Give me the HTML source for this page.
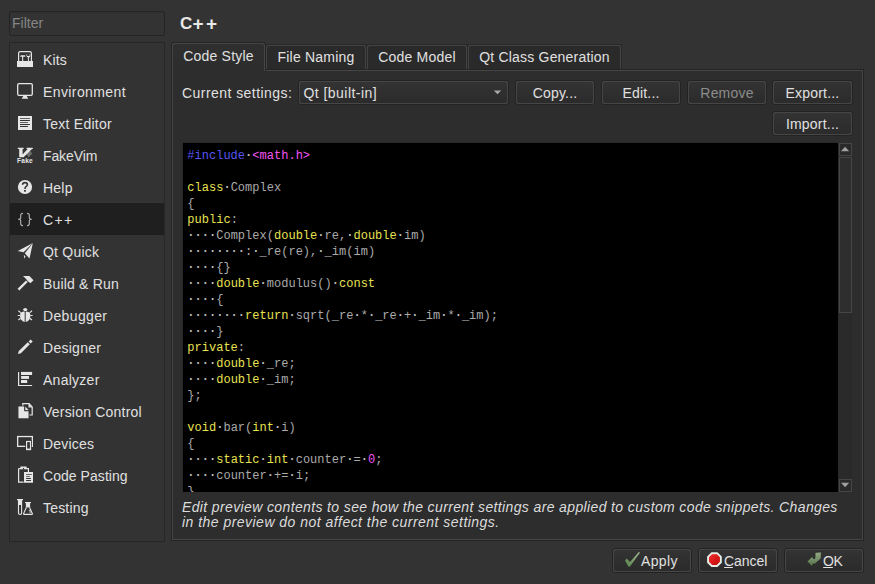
<!DOCTYPE html>
<html><head><meta charset="utf-8">
<style>
*{margin:0;padding:0;box-sizing:border-box}
html,body{width:875px;height:584px;overflow:hidden;background:#333333}
body{position:relative;font-family:"Liberation Sans",sans-serif;font-size:14px;color:#e0e0e0}
.a{position:absolute}
.t{position:absolute;white-space:nowrap;line-height:16px}
#filter{left:9px;top:11px;width:156px;height:25px;border:1px solid #242424;border-radius:2px;background:#333333;box-shadow:inset 0 1px 0 rgba(0,0,0,0.07)}
#filter span{position:absolute;left:2px;top:3px;line-height:16px;color:#868686;letter-spacing:0px}
#list{left:9px;top:42px;width:156px;height:500px;border:1px solid #272727;background:#333333}
.row{position:absolute;left:0;width:154px;height:32px}
.row.sel{background:#1f1f1f}
.row span{position:absolute;left:33px;top:8.5px;line-height:16px;letter-spacing:0.25px;color:#e0e0e0;white-space:nowrap}
.row svg{position:absolute;left:5px;top:6px;width:20px;height:20px}
#title{left:180px;top:16px;font-weight:bold;font-size:17px;color:#e8e8e8}
#title b{display:inline-block;font-size:19px;vertical-align:top;margin-top:-0.5px;width:13.6px;text-align:center;margin-left:-1px}
#title b+b{margin-left:0}
.tab{position:absolute;height:25px;border:1px solid #282828;border-bottom:none;border-radius:3px 3px 0 0;background:#434343;padding:1px 1px 0 1px}
.tab>i{display:block;width:100%;height:100%;background:#2a2a2a;border-radius:2px 2px 0 0}
.tab span{position:absolute;top:4px;left:0;width:100%;text-align:center;letter-spacing:0.2px;color:#e0e0e0;line-height:16px;white-space:nowrap}
#panel{left:171px;top:69px;width:693px;height:472px;border:1px solid #242424;background:#464646;padding:1px}
#panel>div{width:100%;height:100%;background:#2d2d2d}
.btn{position:absolute;height:25px;border:1px solid #232323;border-radius:3px;background:#464646;padding:1px}
.btn>i{display:block;width:100%;height:100%;background:linear-gradient(#333333,#2b2b2b);border-radius:2px}
.btn span{position:absolute;top:3.5px;left:0;width:100%;text-align:center;letter-spacing:0.2px;color:#e0e0e0;line-height:16px;white-space:nowrap}
#editor{left:183px;top:143px;width:655px;height:349px;background:#000;overflow:hidden;box-shadow:-1px -1px 0 #282828}
#code{position:absolute;left:4.3px;top:4.5px;font-family:"Liberation Mono",monospace;font-size:12px;line-height:16px;color:#aaaaaa;white-space:pre;letter-spacing:0.02px}
.k{color:#e8e250}.p{color:#5555f0}.s{color:#f055f0}.d{color:#bdbdbd;font-weight:bold}
#desc{left:182px;top:500px;font-style:italic;color:#dcdcdc;line-height:15px;letter-spacing:0.37px}
svg{overflow:visible}
</style></head><body>
<div id="filter" class="a"><span>Filter</span></div>
<div id="list" class="a">
 <div class="row" style="top:0"><svg viewBox="0 0 20 20"><g fill="#e6e6e6"><path d="M3.6 12V4.2Q3.6 2.6 5.2 2.6H14.8Q16.4 2.6 16.4 4.2V12" fill="none" stroke="#e6e6e6" stroke-width="1.2"/><rect x="2" y="12" width="16" height="6"/><path d="M5 7.2L6 6.2H10.2V7.8H8.2V12H7.1V7.8H5.6Z"/><path fill-rule="evenodd" d="M11.4 6.6A2.1 2.1 0 0 0 12.9 8.6V12H13.9V8.6A2.1 2.1 0 0 0 15.4 6.6Q15.4 5.4 14.6 4.8V7H12.2V4.8Q11.4 5.4 11.4 6.6Z"/></g></svg><span style="letter-spacing:0.17px">Kits</span></div>
 <div class="row" style="top:32px"><svg viewBox="0 0 20 20"><rect x="2.7" y="2.7" width="14.6" height="11.6" rx="1.3" fill="none" stroke="#e6e6e6" stroke-width="1.3"/><path d="M8.3 15H11.7L13.3 17.8H6.7Z" fill="#e6e6e6"/></svg><span style="letter-spacing:0.40px">Environment</span></div>
 <div class="row" style="top:64px"><svg viewBox="0 0 20 20"><path fill="#e6e6e6" fill-rule="evenodd" d="M3 3H17V17H3Z M5 5H14.9V5.8H5Z M5 7.1H14.9V7.9H5Z M5 9.05H12.9V9.85H5Z M5 11.1H14.9V11.9H5Z M5 13.1H12.9V13.9H5Z"/></svg><span style="letter-spacing:0.25px">Text Editor</span></div>
 <div class="row" style="top:96px"><svg viewBox="0 0 20 20"><path d="M10.5 7.5L14 4.5L17.2 8.5L13.6 12.4Z" fill="#6e6e6e"/><path fill="#e6e6e6" d="M2.8 2.8H8.6V4H7.6V9.6L12.6 4H11.6V2.8H17.8V4H17L8.6 12.2H4.2V4H2.8Z"/><text x="10" y="18.2" font-size="6.6" font-weight="bold" text-anchor="middle" font-family="Liberation Sans" fill="#e6e6e6" letter-spacing="0.2">Fake</text></svg><span style="letter-spacing:-0.11px">FakeVim</span></div>
 <div class="row" style="top:128px"><svg viewBox="0 0 20 20"><circle cx="10" cy="10" r="7.1" fill="#e6e6e6"/><path d="M7.6 7.8Q7.6 5.6 10 5.6Q12.4 5.6 12.4 7.6Q12.4 8.8 11 9.6Q10 10.2 10 11.9" fill="none" stroke="#333" stroke-width="1.6"/><rect x="9.1" y="13" width="1.8" height="1.7" fill="#333"/></svg><span style="letter-spacing:0.21px">Help</span></div>
 <div class="row sel" style="top:160px"><svg viewBox="0 0 20 20"><g fill="none" stroke="#b4b4b4" stroke-width="1.1"><path d="M8 4.3Q5.7 4.3 5.7 6.5V8.7Q5.7 10.3 3.2 10.3Q5.7 10.3 5.7 11.9V14.4Q5.7 16.6 8 16.6"/><path d="M12 4.3Q14.3 4.3 14.3 6.5V8.7Q14.3 10.3 16.8 10.3Q14.3 10.3 14.3 11.9V14.4Q14.3 16.6 12 16.6"/></g></svg><span style="letter-spacing:1.30px">C++</span></div>
 <div class="row" style="top:192px"><svg viewBox="0 0 20 20"><g fill="#e6e6e6"><path d="M2.8 10L17.8 2L8.6 11.2Z"/><path d="M9.8 12.3L17.8 2.2L14.5 17.6Z"/><path d="M8.8 14L10.5 15.3L9.4 17.8Z"/></g></svg><span style="letter-spacing:0.22px">Qt Quick</span></div>
 <div class="row" style="top:224px"><svg viewBox="0 0 20 20"><g fill="#e6e6e6"><path d="M2.6 15.8L11 7.4L12.7 9.1L4.3 17.5Z"/><path d="M8 3.1H14.4L18.5 7.3L15.4 10.3L12.9 8.2L10.6 5.6Z"/></g></svg><span style="letter-spacing:0.18px">Build &amp; Run</span></div>
 <div class="row" style="top:256px"><svg viewBox="0 0 20 20"><g fill="#e6e6e6"><path d="M7.9 4.8Q8.5 3 10.2 3Q11.9 3 12.6 4.8L11.3 6H9.2Z"/><path d="M9.7 6.4Q6.5 6.2 5.3 8Q4.6 12 6 14.5Q7.5 16.6 9.7 17Z"/><path d="M10.7 6.4Q13.9 6.2 15.1 8Q15.8 12 14.4 14.5Q12.9 16.6 10.7 17Z"/></g><g stroke="#e6e6e6" stroke-width="1.2"><path d="M3.4 5.8L5.6 7.6M2.8 10.5H5.2M3.4 15L5.6 13.3M17 5.8L14.8 7.6M17.6 10.5H15.2M17 15L14.8 13.3"/></g></svg><span style="letter-spacing:0.36px">Debugger</span></div>
 <div class="row" style="top:288px"><svg viewBox="0 0 20 20"><g fill="#e6e6e6"><path d="M2.9 17.1L3.8 14.1L12.8 5.2L14.8 7.2L5.9 16.2Z"/><path d="M13.6 4.4L15.6 2.4L17.7 4.5L15.7 6.5Z"/></g></svg><span style="letter-spacing:0.27px">Designer</span></div>
 <div class="row" style="top:320px"><svg viewBox="0 0 20 20"><g fill="#e6e6e6"><path d="M3 3H4.2V15.9H17.1V17.1H3Z"/><rect x="6" y="2.9" width="11.1" height="3.1"/><rect x="6.1" y="7" width="7.9" height="2.9"/><rect x="6" y="11" width="6.2" height="3"/></g></svg><span style="letter-spacing:0.26px">Analyzer</span></div>
 <div class="row" style="top:352px"><svg viewBox="0 0 20 20"><path d="M7.8 2.7H14.1L17.2 5.9V14H7.8Z M14.1 2.7V5.9H17.2" fill="none" stroke="#e6e6e6" stroke-width="1.2"/><path d="M3 5H9.6V9.8H14V17.8H3Z" fill="#e6e6e6" stroke="#333" stroke-width="0.9"/><path d="M10.3 5.6L13.6 8.9H10.3Z" fill="#e6e6e6"/></svg><span style="letter-spacing:0.21px">Version Control</span></div>
 <div class="row" style="top:384px"><svg viewBox="0 0 20 20"><rect x="2.65" y="3.55" width="14.7" height="9.8" fill="none" stroke="#e6e6e6" stroke-width="1.3"/><rect x="10.2" y="7.2" width="6.6" height="10.6" fill="#333"/><rect x="11.6" y="8.5" width="3.9" height="8" fill="none" stroke="#e6e6e6" stroke-width="1.2"/><rect x="11" y="15.6" width="5.1" height="1.5" fill="#e6e6e6"/></svg><span style="letter-spacing:0.21px">Devices</span></div>
 <div class="row" style="top:416px"><svg viewBox="0 0 20 20"><path d="M3.6 3.6H6V2.2H11V3.6H13.4V7M8.6 17.2H3.6V3.6" fill="none" stroke="#e6e6e6" stroke-width="1.2"/><rect x="6" y="2" width="5" height="2.2" fill="#e6e6e6"/><circle cx="8.5" cy="3.4" r="0.6" fill="#333"/><path fill="#e6e6e6" fill-rule="evenodd" d="M9 7H18V17.8H9Z M11.1 9H16.8V9.8H11.1Z M11.1 11H14.8V11.8H11.1Z M11.1 13.1H15.9V13.9H11.1Z M11.1 15.1H15.9V15.9H11.1Z"/></svg><span style="letter-spacing:0.05px">Code Pasting</span></div>
 <div class="row" style="top:448px"><svg viewBox="0 0 20 20"><g fill="#e6e6e6"><rect x="2" y="2" width="6" height="1.2"/><path d="M3.5 3V16.2Q3.5 17.4 5.1 17.4Q6.6 17.4 6.6 16.2V3" fill="none" stroke="#e6e6e6" stroke-width="1.1"/><rect x="3.5" y="3" width="3.1" height="5"/><rect x="10" y="5" width="6" height="1.1"/><rect x="10.9" y="6" width="4.2" height="4.5"/><path d="M11.4 10.4L8.6 16.6Q8.3 17.4 9.2 17.4H16.8Q17.7 17.4 17.4 16.6L14.6 10.4" fill="none" stroke="#e6e6e6" stroke-width="1.1"/><rect x="13.8" y="12.8" width="2" height="0.9"/><rect x="14.3" y="14.5" width="2.4" height="1"/></g></svg><span style="letter-spacing:0.19px">Testing</span></div>
</div>
<div id="title" class="t">C<b>+</b><b>+</b></div>
<div id="panel" class="a"><div></div></div>
<div class="tab" style="left:265px;top:44px;width:102px"><i></i><span>File Naming</span></div>
<div class="tab" style="left:366px;top:44px;width:102px"><i></i><span>Code Model</span></div>
<div class="tab" style="left:467px;top:44px;width:155px"><i></i><span>Qt Class Generation</span></div>
<div class="tab" style="left:171px;top:42px;width:95px;height:29px;border-color:#242424;background:#464646"><i style="background:linear-gradient(#2f2f2f,#2d2d2d)"></i><span style="top:5px">Code Style</span></div>
<div class="t" style="left:182px;top:85px;letter-spacing:0.45px">Current settings:</div>
<div class="btn" style="left:298px;top:80px;width:211px"><i></i><span style="text-align:left;left:4.5px;letter-spacing:0.45px">Qt [built-in]</span><svg class="a" style="left:194px;top:9px" width="9" height="5"><path d="M0.8 0.6H8.2L4.5 4.2Z" fill="#a8a8a8"/></svg></div>
<div class="btn" style="left:515px;top:80px;width:80px"><i></i><span>Copy...</span></div>
<div class="btn" style="left:601px;top:80px;width:80px"><i></i><span>Edit...</span></div>
<div class="btn" style="left:687px;top:80px;width:80px"><i></i><span style="color:#8c8c8c">Remove</span></div>
<div class="btn" style="left:772px;top:80px;width:81px"><i></i><span>Export...</span></div>
<div class="btn" style="left:772px;top:111px;width:81px"><i></i><span>Import...</span></div>
<div id="editor" class="a">
<div id="code"><span class="p">#include</span><span class="d">·</span><span class="s">&lt;math.h&gt;</span>

<span class="k">class</span><span class="d">·</span>Complex
{
<span class="k">public</span>:
<span class="d">····</span>Complex(<span class="k">double</span><span class="d">·</span>re,<span class="d">·</span><span class="k">double</span><span class="d">·</span>im)
<span class="d">········</span>:<span class="d">·</span>_re(re),<span class="d">·</span>_im(im)
<span class="d">····</span>{}
<span class="d">····</span><span class="k">double</span><span class="d">·</span>modulus()<span class="d">·</span><span class="k">const</span>
<span class="d">····</span>{
<span class="d">········</span><span class="k">return</span><span class="d">·</span>sqrt(_re<span class="d">·</span>*<span class="d">·</span>_re<span class="d">·</span>+<span class="d">·</span>_im<span class="d">·</span>*<span class="d">·</span>_im);
<span class="d">····</span>}
<span class="k">private</span>:
<span class="d">····</span><span class="k">double</span><span class="d">·</span>_re;
<span class="d">····</span><span class="k">double</span><span class="d">·</span>_im;
};

<span class="k">void</span><span class="d">·</span>bar(<span class="k">int</span><span class="d">·</span>i)
{
<span class="d">····</span><span class="k">static</span><span class="d">·</span><span class="k">int</span><span class="d">·</span>counter<span class="d">·</span>=<span class="d">·</span><span class="s">0</span>;
<span class="d">····</span>counter<span class="d">·</span>+=<span class="d">·</span>i;
}
</div>
</div>
<!-- scrollbar -->
<div class="a" style="left:838px;top:143px;width:14px;height:349px;background:#2a2a2a"></div>
<div class="a" style="left:839px;top:143px;width:13px;height:13px;border:1px solid #464646"></div>
<svg class="a" style="left:839px;top:143px" width="13" height="13"><path d="M2 8.2H10.2L6.1 3.8Z" fill="#a0a0a0"/></svg>
<div class="a" style="left:839px;top:157px;width:13px;height:156px;border:1px solid #464646;background:#2e2e2e"></div>
<div class="a" style="left:839px;top:479px;width:13px;height:13px;border:1px solid #464646"></div>
<svg class="a" style="left:839px;top:479px" width="13" height="13"><path d="M2 3.8H10.2L6.1 8.2Z" fill="#a0a0a0"/></svg>
<div id="desc" class="t">Edit preview contents to see how the current settings are applied to custom code snippets. Changes<br><span style="letter-spacing:0.47px">in the preview do not affect the current settings.</span></div>
<div class="btn" style="left:612px;top:548px;width:80px"><i></i><span style="left:28px;width:auto;letter-spacing:0.35px">Apply</span><svg class="a" style="left:-1px;top:-1px" width="40" height="25"><defs><linearGradient id="g0" x1="0" y1="1" x2="1" y2="0"><stop offset="0" stop-color="#55804a"/><stop offset="1" stop-color="#a4b894"/></linearGradient></defs><path d="M13 12.4L14.7 10.6L18 14.1L27 3.8L27.9 4.8L17.8 18.8L16.4 18.4Z" fill="url(#g0)"/></svg></div>
<div class="btn" style="left:698px;top:548px;width:80px"><i></i><span style="left:25px;width:auto;letter-spacing:-0.05px">Cancel</span><svg class="a" style="left:-1px;top:-1px" width="30" height="25"><defs><linearGradient id="gr" x1="0" y1="0" x2="1" y2="1"><stop offset="0" stop-color="#f43030"/><stop offset="1" stop-color="#c00404"/></linearGradient></defs><path d="M13.8 5.2H19.1L22.85 8.95V14.25L19.1 18H13.8L10.05 14.25V8.95Z" fill="url(#gr)" stroke="#e4ece4" stroke-width="1.9"/></svg><i class="a" style="left:25px;top:18px;width:9px;height:1px;background:#e0e0e0"></i></div>
<div class="btn" style="left:784px;top:548px;width:80px"><i></i><span style="left:38px;width:auto;letter-spacing:-0.4px">OK</span><svg class="a" style="left:-1px;top:-1px" width="40" height="25"><defs><linearGradient id="g1" x1="0" y1="0" x2="0" y2="1"><stop offset="0" stop-color="#94a884"/><stop offset="0.5" stop-color="#74906a"/><stop offset="1" stop-color="#4c6a40"/></linearGradient></defs><path d="M31.1 4.4L37.3 4L37.1 10.4L31.3 15.8L28.9 16.2L28.2 18.8L23.1 13.5L28.4 8.2L29.2 10.4L31 10.4Z" fill="url(#g1)" stroke="#1e1e1e" stroke-width="0.6"/></svg><i class="a" style="left:38px;top:18px;width:10px;height:1px;background:#e0e0e0"></i></div>
</body></html>
